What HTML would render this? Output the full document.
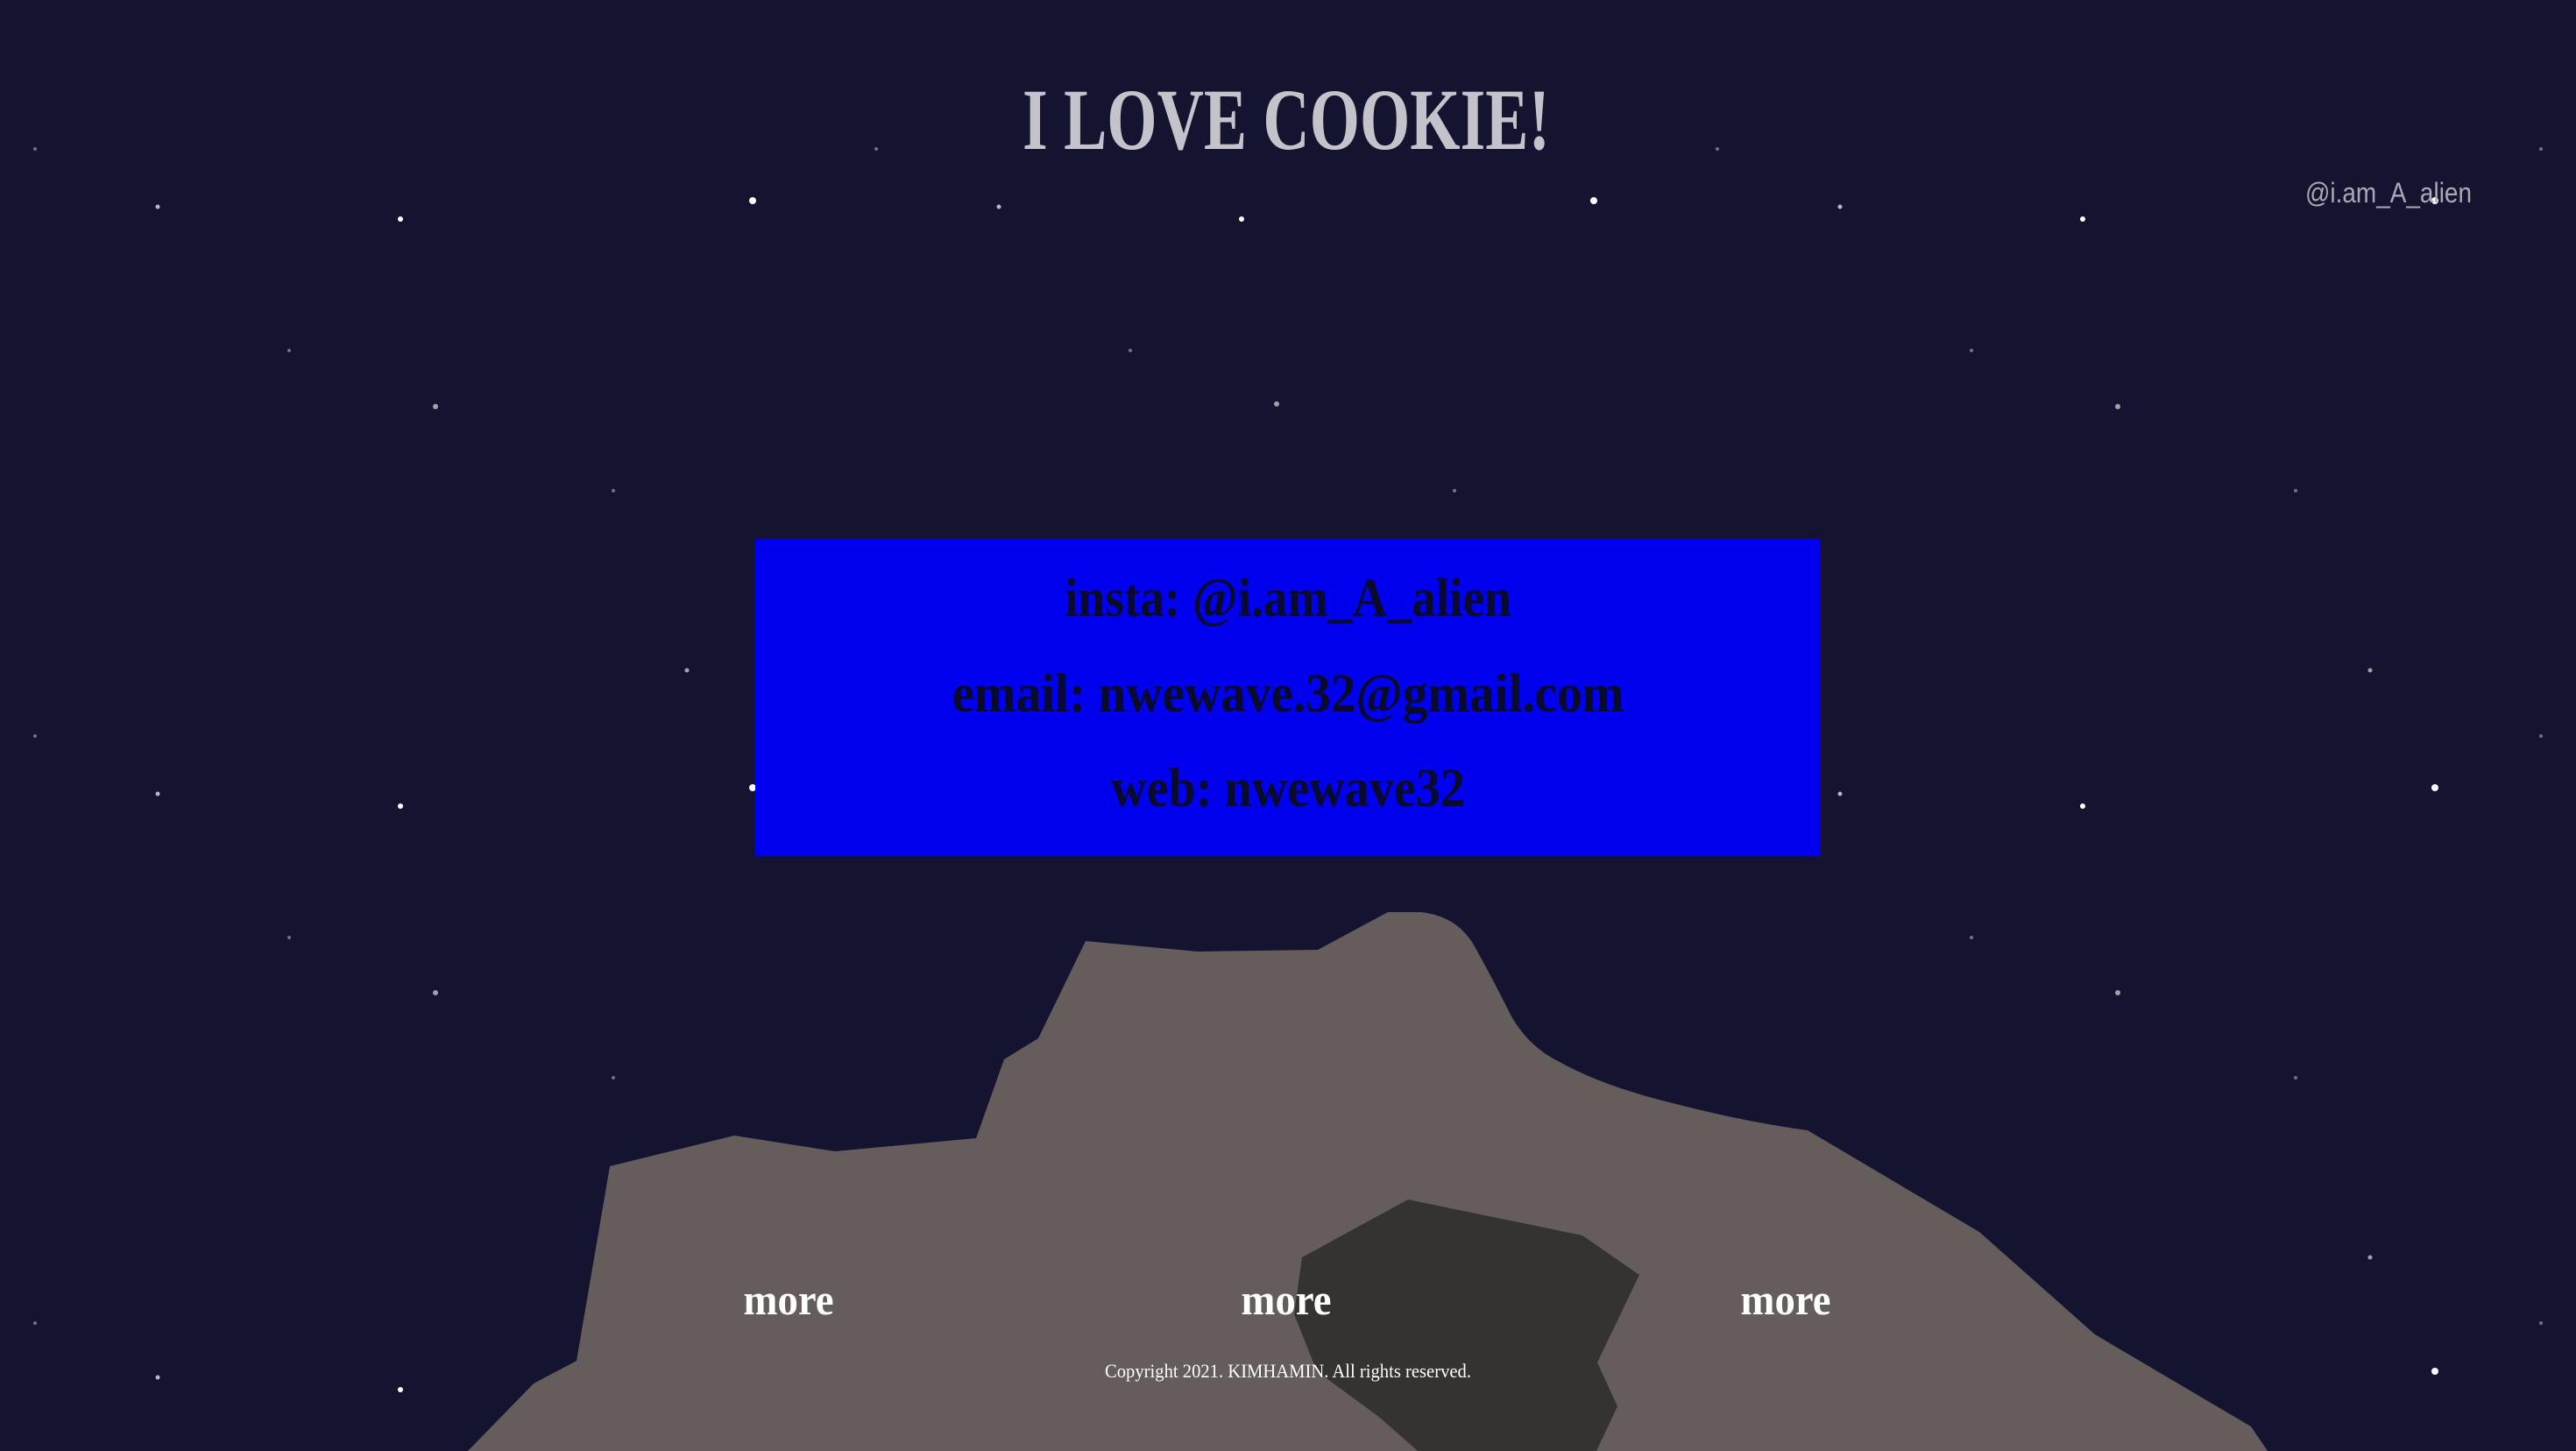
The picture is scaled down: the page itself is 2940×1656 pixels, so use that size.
<!DOCTYPE html>
<html><head><meta charset="utf-8"><style>
html,body{margin:0;padding:0;background:#141430;width:2940px;height:1656px;overflow:hidden}
svg{display:block}
text{font-family:"Liberation Serif",serif;font-weight:bold}
</style></head><body>
<svg width="2940" height="1656" viewBox="0 0 2940 1656" xmlns="http://www.w3.org/2000/svg">
<rect width="2940" height="1656" fill="#141430"/>
<g fill="#ffffff">
<circle cx="859" cy="229" r="4"/><circle cx="1819" cy="229" r="4"/><circle cx="457" cy="250" r="3"/><circle cx="1417" cy="250" r="3"/><circle cx="2377" cy="250" r="3"/>
<circle cx="180" cy="236" r="2.5" opacity=".7"/><circle cx="1140" cy="236" r="2.5" opacity=".7"/><circle cx="2100" cy="236" r="2.5" opacity=".7"/><circle cx="2779" cy="229" r="4"/>
<circle cx="497" cy="464" r="3" opacity=".6"/><circle cx="1457" cy="461" r="3" opacity=".6"/><circle cx="2417" cy="464" r="3" opacity=".6"/>
<circle cx="859" cy="899" r="4"/><circle cx="2779" cy="899" r="4"/><circle cx="457" cy="920" r="3"/><circle cx="2377" cy="920" r="3"/>
<circle cx="180" cy="906" r="2.5" opacity=".7"/><circle cx="2100" cy="906" r="2.5" opacity=".7"/>
<circle cx="497" cy="1133" r="3" opacity=".6"/><circle cx="2417" cy="1133" r="3" opacity=".6"/>
<circle cx="2779" cy="1565" r="4"/><circle cx="457" cy="1586" r="3"/><circle cx="180" cy="1572" r="2.5" opacity=".7"/>
<circle cx="784" cy="765" r="2.5" opacity=".6"/><circle cx="2705" cy="765" r="2.5" opacity=".6"/><circle cx="2705" cy="1435" r="2.5" opacity=".6"/>
<circle cx="40" cy="170" r="2" opacity=".4"/><circle cx="1000" cy="170" r="2" opacity=".4"/><circle cx="1960" cy="170" r="2" opacity=".4"/><circle cx="2900" cy="170" r="2" opacity=".4"/>
<circle cx="330" cy="400" r="2" opacity=".4"/><circle cx="1290" cy="400" r="2" opacity=".4"/><circle cx="2250" cy="400" r="2" opacity=".4"/>
<circle cx="700" cy="560" r="2" opacity=".4"/><circle cx="1660" cy="560" r="2" opacity=".4"/><circle cx="2620" cy="560" r="2" opacity=".4"/>
<circle cx="40" cy="840" r="2" opacity=".4"/><circle cx="2900" cy="840" r="2" opacity=".4"/><circle cx="330" cy="1070" r="2" opacity=".4"/><circle cx="2620" cy="1230" r="2" opacity=".4"/>
<circle cx="700" cy="1230" r="2" opacity=".4"/><circle cx="40" cy="1510" r="2" opacity=".4"/><circle cx="2900" cy="1510" r="2" opacity=".4"/><circle cx="2250" cy="1070" r="2" opacity=".4"/>
</g>
<text x="1468" y="170" text-anchor="middle" font-size="100" fill="#c4c3cc" textLength="602" lengthAdjust="spacingAndGlyphs">I LOVE COOKIE!</text>
<text x="2726" y="231" text-anchor="middle" font-size="32" fill="#a9a9b5" style="font-family:'Liberation Sans',sans-serif;font-weight:normal" textLength="190" lengthAdjust="spacingAndGlyphs">@i.am_A_alien</text>
<rect x="862" y="615" width="1215" height="362" fill="#0000ef"/>
<g fill="#0a0a2a" font-size="62">
<text x="1470" y="703" text-anchor="middle" textLength="510" lengthAdjust="spacingAndGlyphs">insta: @i.am_A_alien</text>
<text x="1470" y="812" text-anchor="middle" textLength="767" lengthAdjust="spacingAndGlyphs">email: nwewave.32@gmail.com</text>
<text x="1470" y="920" text-anchor="middle" textLength="404" lengthAdjust="spacingAndGlyphs">web: nwewave32</text>
</g>
<path fill="#655c5c" d="M534 1656 L609 1579 L658 1553 L696 1331 L838 1296 L953 1314 L1114 1299 L1146 1209 L1185 1185 L1239 1074 L1367 1086 L1504 1084 L1584 1041 L1622 1041 Q1660 1045 1680 1075 Q1700 1110 1725 1160 Q1745 1195 1780 1212 Q1830 1240 1913 1260 Q1990 1280 2063 1290 L2259 1406 L2391 1523 L2569 1628 L2588 1656 Z"/>
<path fill="#353331" d="M1486 1435 L1607 1369 L1806 1410 L1871 1455 L1823 1555 L1846 1605 L1822 1656 L1618 1656 L1575 1618 L1503 1565 L1477 1500 Z"/>
<g fill="#ffffff" font-size="50">
<text x="900" y="1500" text-anchor="middle" textLength="103" lengthAdjust="spacingAndGlyphs">more</text>
<text x="1468" y="1500" text-anchor="middle" textLength="103" lengthAdjust="spacingAndGlyphs">more</text>
<text x="2038" y="1500" text-anchor="middle" textLength="103" lengthAdjust="spacingAndGlyphs">more</text>
<text x="1470" y="1572" text-anchor="middle" font-size="22" style="font-weight:normal" textLength="418" lengthAdjust="spacingAndGlyphs">Copyright 2021. KIMHAMIN. All rights reserved.</text>
</g>
</svg>
</body></html>
